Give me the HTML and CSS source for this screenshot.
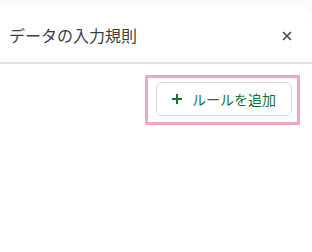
FILE: index.html
```html
<!DOCTYPE html>
<html lang="ja">
<head>
    <meta charset="UTF-8">
    <meta name="viewport" content="width=device-width, initial-scale=1.0">
    <title>データの入力規則</title>
    <link rel="stylesheet" href="styles.css">
</head>
<body>
    <div class="panel">
        <header class="panel-header">
            <h1 class="title">データの入力規則</h1>
            <button class="btn-close" aria-label="閉じる">
                <svg width="10" height="10" viewBox="0 0 10 10">
                    <path d="M1 1 L9 9 M9 1 L1 9" stroke="#444746" stroke-width="1.6" fill="none"/>
                </svg>
            </button>
        </header>
        <div class="actions">
            <div class="highlight">
                <button class="btn-add">
                    <svg class="plus" width="10" height="10" viewBox="0 0 10 10">
                        <path d="M5 0 V10 M0 5 H10" stroke="#137333" stroke-width="2" fill="none"/>
                    </svg>
                    ルールを追加
                </button>
            </div>
        </div>
    </div>
</body>
</html>
```

FILE: styles.css
```css
body {
    margin: 0;
    background-color: #f9fbfd;
    font-family: "Noto Sans CJK JP", "Noto Sans", sans-serif;
    height: 252px;
    overflow: hidden;
}
.panel {
    margin-top: 6px;
    margin-left: -20px;
    padding-left: 20px;
    background-color: white;
    border-top-right-radius: 16px;
    height: 246px;
}
.panel-header {
    display: flex;
    align-items: center;
    justify-content: space-between;
    height: 56px;
    padding: 0 19px 0 9px;
    border-bottom: 2px solid #e1e3e1;
}
.title {
    margin: 0;
    font-size: 16px;
    font-weight: normal;
    color: #3c4043;
    padding-top: 2px;
}
.btn-close {
    border: none;
    background: none;
    padding: 0;
    width: 12px;
    height: 12px;
    display: flex;
    align-items: center;
    justify-content: center;
    margin-top: 4px;
}
.actions {
    display: flex;
    justify-content: flex-end;
    padding: 11px 12px 0 0;
}
.highlight {
    border: 3px solid #f3a6c4;
    padding: 4px 5px 6px 8px;
}
.btn-add {
    display: flex;
    align-items: center;
    width: 136px;
    height: 34px;
    padding: 0 0 0 15px;
    border: 1px solid #dadce0;
    border-radius: 5px;
    background: white;
    color: #137333;
    font-family: "Noto Sans CJK JP", sans-serif;
    font-size: 14px;
}
.plus {
    margin-right: 10px;
}
```
